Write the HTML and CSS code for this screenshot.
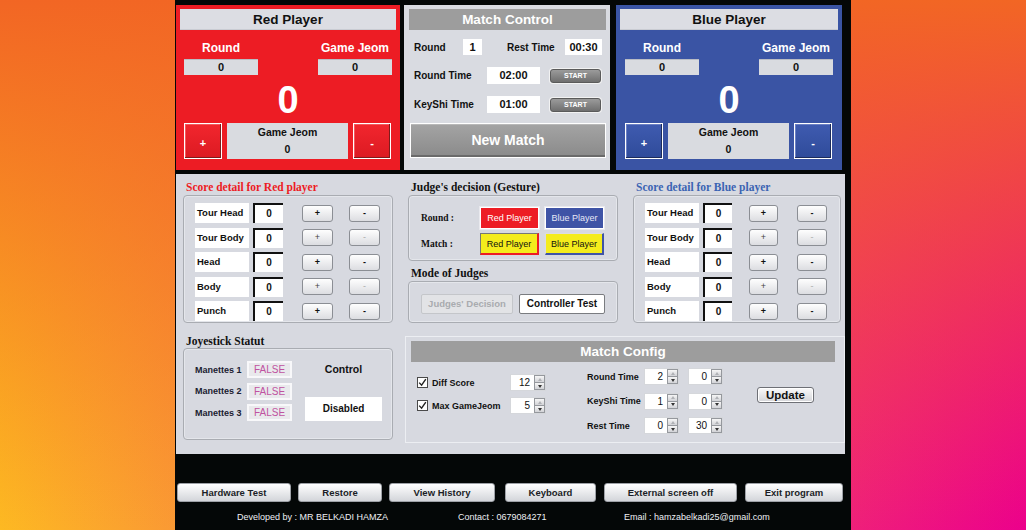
FILE: index.html
```html
<!DOCTYPE html>
<html>
<head>
<meta charset="utf-8">
<link rel="stylesheet" href="styles.css">
</head>
<body>
<div class="app">
  <div class="top">
    <section class="player red">
      <div class="ptitle">Red Player</div>
      <div class="stats">
        <div class="stat"><div class="slabel">Round</div><div class="sbox">0</div></div>
        <div class="stat"><div class="slabel">Game Jeom</div><div class="sbox">0</div></div>
      </div>
      <div class="big">0</div>
      <div class="pfoot">
        <div class="pbtn">+</div>
        <div class="gj"><span>Game Jeom</span><span>0</span></div>
        <div class="pbtn">-</div>
      </div>
    </section>
    <section class="control">
      <div class="ctitle">Match Control</div>
      <div class="crow r1">
        <span class="cl w49">Round</span><span class="cbox w19">1</span>
        <span class="cl w58 ml25">Rest Time</span><span class="cbox w37">00:30</span>
      </div>
      <div class="crow r2">
        <span class="cl w73">Round Time</span><span class="cbox w53">02:00</span>
        <span class="start">START</span>
      </div>
      <div class="crow r2">
        <span class="cl w73">KeyShi Time</span><span class="cbox w53">01:00</span>
        <span class="start">START</span>
      </div>
      <div class="newmatch">New Match</div>
    </section>
    <section class="player blue">
      <div class="ptitle">Blue Player</div>
      <div class="stats">
        <div class="stat"><div class="slabel">Round</div><div class="sbox">0</div></div>
        <div class="stat"><div class="slabel">Game Jeom</div><div class="sbox">0</div></div>
      </div>
      <div class="big">0</div>
      <div class="pfoot">
        <div class="pbtn">+</div>
        <div class="gj"><span>Game Jeom</span><span>0</span></div>
        <div class="pbtn">-</div>
      </div>
    </section>
  </div>

  <div class="main">
    <div class="rowA">
      <div class="col">
        <div class="h redt">Score detail for Red player</div>
        <div class="gbox score">
          <div class="srow"><span class="lab">Tour Head</span><span class="val">0</span><span class="pm plus">+</span><span class="pm minus">-</span></div>
          <div class="srow dim"><span class="lab">Tour Body</span><span class="val">0</span><span class="pm plus">+</span><span class="pm minus">-</span></div>
          <div class="srow"><span class="lab">Head</span><span class="val">0</span><span class="pm plus">+</span><span class="pm minus">-</span></div>
          <div class="srow dim"><span class="lab">Body</span><span class="val">0</span><span class="pm plus">+</span><span class="pm minus">-</span></div>
          <div class="srow"><span class="lab">Punch</span><span class="val">0</span><span class="pm plus">+</span><span class="pm minus">-</span></div>
        </div>
      </div>
      <div class="col">
        <div class="h">Judge's decision (Gesture)</div>
        <div class="gbox judge">
          <div class="jrow"><span class="jl">Round :</span><span class="jb jred">Red Player</span><span class="jb jblue">Blue Player</span></div>
          <div class="jrow"><span class="jl">Match :</span><span class="jb yred">Red Player</span><span class="jb yblue">Blue Player</span></div>
        </div>
        <div class="h hmode">Mode of Judges</div>
        <div class="gbox mode">
          <span class="mb disabled">Judges' Decision</span>
          <span class="mb active">Controller Test</span>
        </div>
      </div>
      <div class="col col3">
        <div class="h bluet">Score detail for Blue player</div>
        <div class="gbox score bscore">
          <div class="srow"><span class="lab">Tour Head</span><span class="val">0</span><span class="pm plus">+</span><span class="pm minus">-</span></div>
          <div class="srow dim"><span class="lab">Tour Body</span><span class="val">0</span><span class="pm plus">+</span><span class="pm minus">-</span></div>
          <div class="srow"><span class="lab">Head</span><span class="val">0</span><span class="pm plus">+</span><span class="pm minus">-</span></div>
          <div class="srow dim"><span class="lab">Body</span><span class="val">0</span><span class="pm plus">+</span><span class="pm minus">-</span></div>
          <div class="srow"><span class="lab">Punch</span><span class="val">0</span><span class="pm plus">+</span><span class="pm minus">-</span></div>
        </div>
      </div>
    </div>

    <div class="rowB">
      <div class="col">
        <div class="h hjoy">Joyestick Statut</div>
        <div class="gbox joy">
          <div class="mans">
            <div class="man"><span class="ml">Manettes 1</span><span class="fbox">FALSE</span></div>
            <div class="man"><span class="ml">Manettes 2</span><span class="fbox">FALSE</span></div>
            <div class="man"><span class="ml">Manettes 3</span><span class="fbox">FALSE</span></div>
          </div>
          <div class="ctrl">
            <div class="ctl">Control</div>
            <div class="dis">Disabled</div>
          </div>
        </div>
      </div>
      <div class="cfg">
        <div class="ctitle cfgtitle">Match Config</div>
        <div class="cfgbody">
          <div class="cfa">
            <div class="crw">
              <span class="chk"><svg width="9" height="9" viewBox="0 0 9 9"><path d="M1.2 4.6 L3.6 7.2 L7.8 1.2" fill="none" stroke="#222" stroke-width="1.4"/></svg></span>
              <span class="cfl w78">Diff Score</span>
              <span class="spin w36"><span class="sv">12</span><span class="arr"><i class="up"></i><i class="dn"></i></span></span>
            </div>
            <div class="crw">
              <span class="chk"><svg width="9" height="9" viewBox="0 0 9 9"><path d="M1.2 4.6 L3.6 7.2 L7.8 1.2" fill="none" stroke="#222" stroke-width="1.4"/></svg></span>
              <span class="cfl w78">Max GameJeom</span>
              <span class="spin w36"><span class="sv">5</span><span class="arr"><i class="up"></i><i class="dn"></i></span></span>
            </div>
          </div>
          <div class="cfb">
            <div class="crw2">
              <span class="cfl w57">Round Time</span>
              <span class="spin"><span class="sv">2</span><span class="arr"><i class="up"></i><i class="dn"></i></span></span>
              <span class="spin s2"><span class="sv">0</span><span class="arr"><i class="up"></i><i class="dn"></i></span></span>
            </div>
            <div class="crw2">
              <span class="cfl w57">KeyShi Time</span>
              <span class="spin"><span class="sv">1</span><span class="arr"><i class="up"></i><i class="dn"></i></span></span>
              <span class="spin s2"><span class="sv">0</span><span class="arr"><i class="up"></i><i class="dn"></i></span></span>
            </div>
            <div class="crw2">
              <span class="cfl w57">Rest Time</span>
              <span class="spin"><span class="sv">0</span><span class="arr"><i class="up"></i><i class="dn"></i></span></span>
              <span class="spin s2"><span class="sv">30</span><span class="arr"><i class="up"></i><i class="dn"></i></span></span>
            </div>
          </div>
          <div class="cfc"><span class="update">Update</span></div>
        </div>
      </div>
    </div>
  </div>

  <div class="buttons">
    <span class="bb b1">Hardware Test</span>
    <span class="bb b2">Restore</span>
    <span class="bb b3">View History</span>
    <span class="bb b4">Keyboard</span>
    <span class="bb b5">External screen off</span>
    <span class="bb b6">Exit program</span>
  </div>
  <div class="footer">
    <span class="f1">Developed by : MR BELKADI HAMZA</span>
    <span class="f2">Contact : 0679084271</span>
    <span class="f3">Email : hamzabelkadi25@gmail.com</span>
  </div>
</div>
</body>
</html>
```
FILE: styles.css
```css
* { box-sizing: border-box; margin: 0; padding: 0; }
html, body { width: 1026px; height: 530px; overflow: hidden; }
body {
  background:
    linear-gradient(to bottom, #f26624 0%, rgba(242, 102, 36, 0) 100%),
    linear-gradient(to right, #fdb922 0%, #ec008c 100%);
  font-family: "Liberation Sans", Arial, sans-serif;
  color: #111;
}
.app {
  margin-left: 175px;
  width: 676px;
  height: 530px;
  background: #040707;
  display: flex;
  flex-direction: column;
  padding-left: 1px;
}

/* ---------- top panels ---------- */
.top { display: flex; margin-top: 5px; height: 165px; }
.player { display: flex; flex-direction: column; padding: 4px 4px 0; }
.red { width: 224px; background: #ed1c24; }
.blue { width: 226px; margin-left: 6px; background: #3a54a4; }
.ptitle {
  height: 21px; background: #dcdde3; color: #111;
  font-weight: 700; font-size: 13.5px; line-height: 21px; text-align: center;
  border-bottom: 1px solid #c9cbd2;
}
.stats { display: flex; justify-content: space-between; padding: 11px 4px 0; }
.blue .stats { padding: 11px 5px 0; }
.stat { width: 74px; display: flex; flex-direction: column; align-items: center; }
.slabel { color: #fff; font-weight: 700; font-size: 12px; line-height: 15px; margin-bottom: 3px; }
.sbox {
  width: 100%; height: 16px; background: #d9dbe0; border-top: 1px solid #b9bcc4;
  font-size: 11px; font-weight: 700; text-align: center; line-height: 15px;
}
.big { height: 48px; line-height: 50px; color: #fff; font-weight: 700; font-size: 38px; text-align: center; }
.pfoot { display: flex; gap: 5px; padding: 0 4px; height: 36px; }
.blue .pfoot { padding: 0 5px; }
.pbtn {
  width: 38px; height: 36px; border: 1px solid #fff;
  color: #fff; font-weight: 700; font-size: 11px;
  display: flex; align-items: center; justify-content: center;
  padding-top: 3px;
}
.red .pbtn { background: linear-gradient(#f2262e, #dc1a22); box-shadow: inset -1px -1px 0 #7e1c1c, inset 1px 1px 0 #f5585d; }
.blue .pbtn { background: linear-gradient(#3f5bb0, #2f4b9a); box-shadow: inset -1px -1px 0 #1c2c5c, inset 1px 1px 0 #6b80c4; }
.gj {
  width: 121px; background: #d9dbe0; display: flex; flex-direction: column;
  align-items: center; font-weight: 700; padding-top: 3px; gap: 5px;
}
.gj span:first-child { font-size: 10.5px; line-height: 12px; }
.gj span:last-child { font-size: 10.5px; line-height: 12px; }

/* match control */
.control { width: 206px; margin-left: 4px; background: #d9dbe1; padding: 4px 4px 0 5px; }
.ctitle {
  height: 21px; background: #9d9d9d; color: #fff; font-weight: 700;
  font-size: 13.5px; line-height: 21px; text-align: center;
}
.crow { display: flex; align-items: center; padding-left: 5px; }
.crow.r1 { margin-top: 9px; height: 16px; }
.crow.r2 { margin-top: 12px; height: 17px; }
.cl { font-weight: 700; font-size: 10px; }
.cbox { background: #fff; height: 100%; text-align: center; font-weight: 700; font-size: 11px; line-height: 16px; }
.w49 { width: 49px; } .w19 { width: 19px; } .w58 { width: 58px; } .w37 { width: 37px; }
.w73 { width: 73px; } .w53 { width: 53px; } .ml25 { margin-left: 25px; }
.start {
  margin-left: 10px; width: 51px; height: 14px; border-radius: 3px;
  background: linear-gradient(#9b9b9b, #6f6f6f); border: 1px solid #5a5a5a;
  box-shadow: 0 0 0 1px #f2f2f2;
  color: #fff; font-weight: 700; font-size: 7px; line-height: 12px; text-align: center;
}
.newmatch {
  margin-top: 10px; margin-left: 1px; width: 196px; height: 35px;
  border: 1px solid #fff;
  background: linear-gradient(#a4a4a4, #8a8a8a);
  box-shadow: inset 0 -2px 0 #6a6a6a, inset 0 1px 0 #b8b8b8;
  color: #fff; font-weight: 700; font-size: 14px; line-height: 33px; text-align: center;
}

/* ---------- main grey ---------- */
.main { margin-top: 4px; width: 669px; height: 280px; background: #d7d9e0; padding: 6px 0 0 7px; }
.rowA { display: flex; gap: 15px; }
.col { width: 210px; }
.col3 { width: 208px; }
.h {
  font-family: "Liberation Serif", "Times New Roman", serif; font-weight: 700;
  font-size: 11.5px; line-height: 15px; height: 15px; padding-left: 3px; color: #111;
}
.h.redt { color: #ed1c24; }
.h.bluet { color: #3b64b3; }
.gbox { border: 1px solid #a9acb2; border-radius: 4px; box-shadow: inset 0 0 0 1px #e4e6eb; }

.score { height: 128px; padding: 7px 0 0 11px; display: flex; flex-direction: column; gap: 4.5px; }
.srow { display: flex; align-items: center; height: 20px; }
.lab { width: 54px; height: 20px; background: #fff; font-weight: 700; font-size: 9.5px; line-height: 20px; padding-left: 2px; }
.val {
  width: 30px; height: 20px; margin-left: 4px; background: #fff;
  border-top: 2px solid #111; border-left: 2px solid #111;
  font-weight: 700; font-size: 10px; text-align: center; line-height: 18px;
}
.pm {
  width: 31px; height: 17px; border: 1px solid #8b8e94; border-radius: 3px;
  background: linear-gradient(#fefefe, #dcdde1);
  font-weight: 700; font-size: 9px; line-height: 15px; text-align: center;
}
.plus { margin-left: 19px; }
.minus { margin-left: 16px; }
.dim .plus { font-weight: 400; color: #444; }
.dim .minus { font-weight: 400; color: #aaa; }
.bscore .val { width: 29px; }
.bscore .plus { margin-left: 17px; width: 29px; }
.bscore .minus { margin-left: 19px; width: 30px; }

.judge { height: 66px; padding: 11px 0 0 12px; display: flex; flex-direction: column; gap: 4px; }
.jrow { display: flex; align-items: center; height: 22px; }
.jl { width: 59px; font-family: "Liberation Serif", serif; font-weight: 700; font-size: 9.5px; }
.jb { width: 59px; height: 22px; font-size: 9px; line-height: 20px; text-align: center; }
.jb + .jb { margin-left: 6px; }
.jred { background: #ed1c24; color: #fff; border: 1px solid #fff; box-shadow: 0 0 0 1px #e9e9ee; }
.jblue { background: #3f54a6; color: #e6e8f6; border: 1px solid #fff; box-shadow: 0 0 0 1px #e9e9ee; }
.yred { background: #f4ec1c; border-top: 1px solid #777; border-left: 1px solid #777; border-right: 2px solid #ed1c24; border-bottom: 2px solid #ed1c24; }
.yblue { background: #f4ec1c; border-top: 1px solid #ddd; border-left: 1px solid #ddd; border-right: 2px solid #3f54a6; border-bottom: 2px solid #3f54a6; }
.hmode { margin-top: 5px; }
.mode { height: 42px; padding: 12px 0 0 12px; display: flex; gap: 6px; }
.mb { height: 20px; font-weight: 700; font-size: 9.5px; line-height: 18px; text-align: center; border-radius: 2px; }
.disabled { width: 92px; background: #e2e3e6; color: #a9abaf; border: 1px solid #c4c6ca; }
.active { width: 86px; background: #fff; color: #111; border: 1px solid #7a7c80; font-size: 10px; }

.rowB { display: flex; margin-top: 11px; }
.hjoy { height: 14px; line-height: 14px; }
.joy { height: 92px; padding: 12px 0 0 11px; display: flex; }
.mans { display: flex; flex-direction: column; gap: 4.5px; }
.man { display: flex; align-items: center; height: 17px; }
.ml { width: 52px; font-weight: 700; font-size: 9px; color: #1a2030; }
.fbox {
  width: 45px; height: 17px; background: #e9e9ec; border: 2px solid #f8f8fa;
  color: #c052a0; font-size: 10px; line-height: 13px; text-align: center;
}
.ctrl { margin-left: 13px; width: 77px; display: flex; flex-direction: column; align-items: center; }
.ctl { height: 17px; line-height: 17px; font-weight: 700; font-size: 10.5px; }
.dis { margin-top: 19px; width: 77px; height: 24px; background: #fff; font-weight: 700; font-size: 10px; line-height: 24px; text-align: center; }

.cfg {
  margin-left: 12px; margin-top: 2px; width: 440px; height: 107px;
  border: 1px solid #eceef2; padding: 4px 9px 0 5px;
}
.cfgtitle { width: 424px; }
.cfgbody { display: flex; padding-left: 6px; margin-top: 6px; }
.cfa { width: 170px; padding-top: 6px; display: flex; flex-direction: column; gap: 6px; }
.crw { display: flex; align-items: center; height: 17px; }
.chk {
  width: 11px; height: 11px; background: #fff; border: 1px solid #4a4a4a;
  display: flex; align-items: center; justify-content: center; margin-right: 4px;
}
.cfl { font-weight: 700; font-size: 9px; }
.w78 { width: 78px; } .w57 { width: 57px; }
.spin { display: flex; width: 35px; height: 17px; background: #fff; border: 1px solid #d5d7db; }
.spin.w36 { width: 36px; }
.spin.s2 { margin-left: 9px; }
.sv { flex: 1; text-align: right; padding-right: 4px; font-size: 10px; line-height: 15px; }
.arr { width: 11px; display: flex; flex-direction: column; }
.arr i {
  flex: 1; display: flex; align-items: center; justify-content: center;
  background: linear-gradient(#f6f6f6, #d2d3d7); border: 1px solid #95989d;
}
.arr i + i { border-top: none; }
.arr i::after { content: ""; border-left: 2px solid transparent; border-right: 2px solid transparent; }
.arr i.up::after { border-bottom: 3px solid #b0b2b6; }
.arr i.dn::after { border-top: 3px solid #333; }
.cfb { width: 170px; display: flex; flex-direction: column; gap: 7.5px; }
.crw2 { display: flex; align-items: center; height: 17px; }
.cfc { padding-top: 19px; }
.update {
  display: block; width: 57px; height: 16px; border: 1px solid #6e7076; border-radius: 3px;
  background: linear-gradient(#fafafa, #d4d5d9); box-shadow: inset 0 0 0 1px #fff;
  font-weight: 700; font-size: 11.5px; line-height: 14px; text-align: center;
}

/* ---------- bottom ---------- */
.buttons { display: flex; margin-top: 29px; padding-left: 1px; height: 19px; }
.bb {
  height: 19px; border: 1px solid #9ea1a7; border-radius: 3px;
  background: linear-gradient(#ffffff, #d3d5da);
  font-weight: 700; font-size: 9.5px; line-height: 17px; text-align: center; color: #1b1e26;
}
.b1 { width: 114px; }
.b2 { width: 84px; margin-left: 7px; }
.b3 { width: 106px; margin-left: 7px; }
.b4 { width: 91px; margin-left: 10px; }
.b5 { width: 133px; margin-left: 8px; }
.b6 { width: 98px; margin-left: 8px; }
.footer { display: flex; margin-top: 9px; padding-left: 61px; color: #eef0f4; font-size: 9px; line-height: 12px; }
.f1 { width: 221px; }
.f2 { width: 166px; }
```
